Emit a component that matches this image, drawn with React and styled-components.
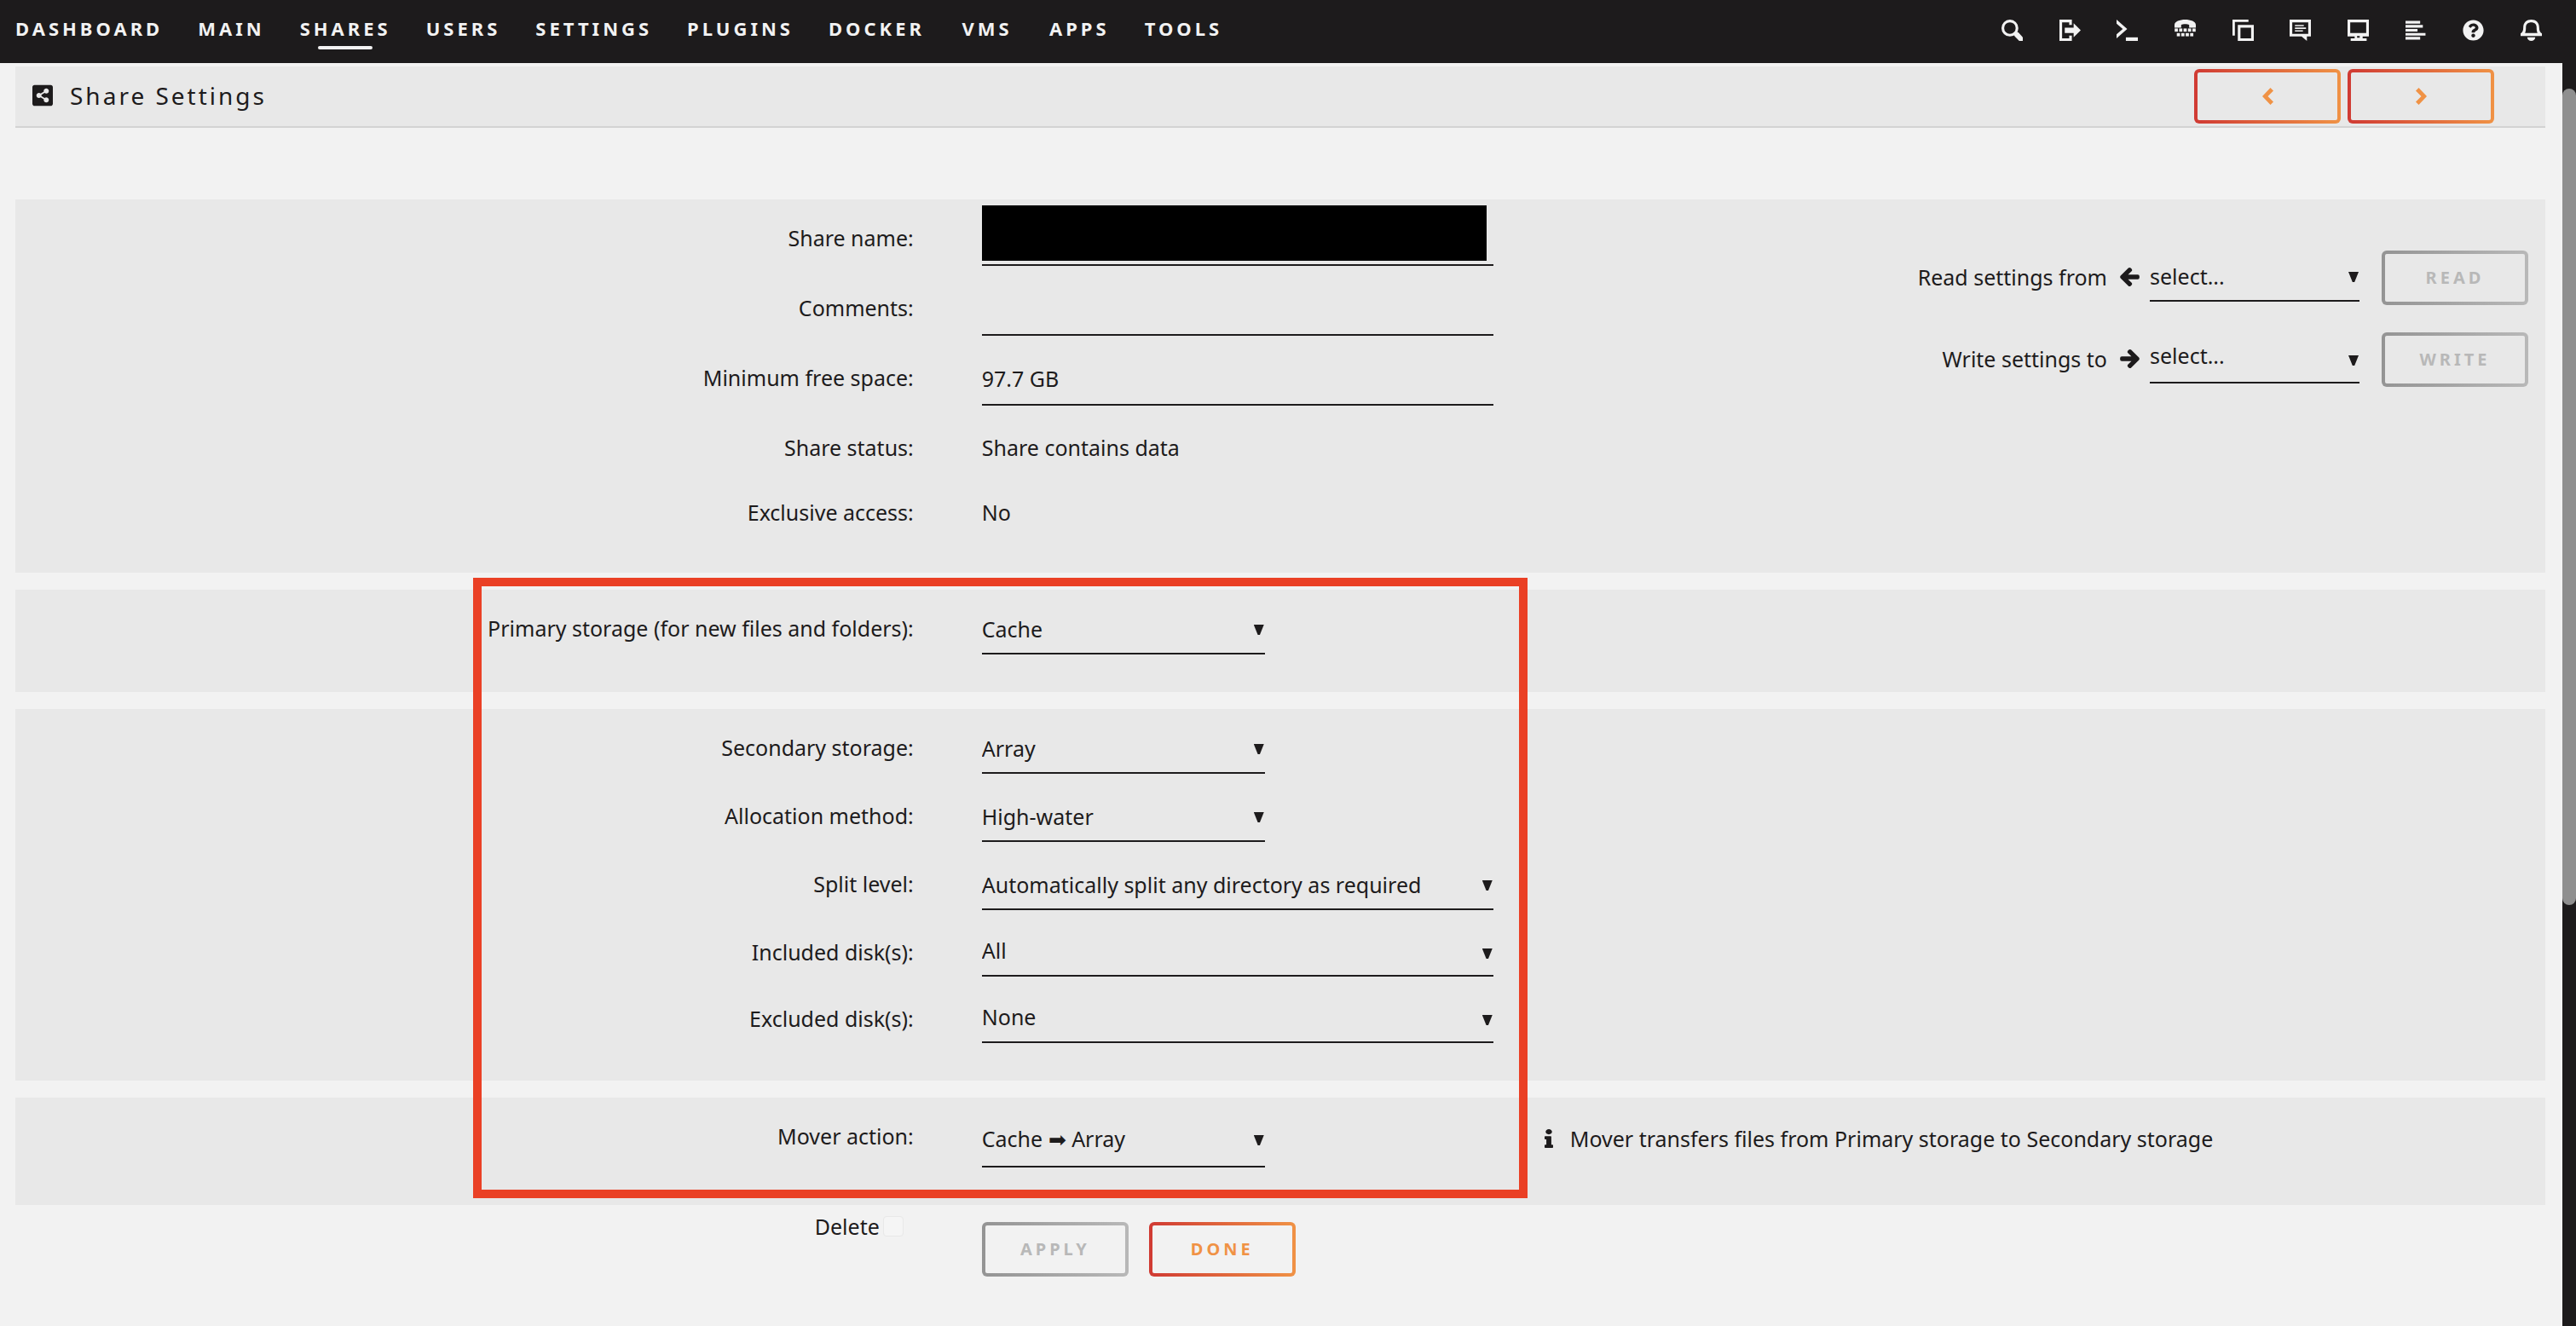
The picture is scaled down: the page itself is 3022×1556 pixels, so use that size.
import React from 'react'
import styled, { createGlobalStyle } from 'styled-components'
import {
  FaArrowLeft,
  FaArrowRight,
  FaInfo,
  FaQuestionCircle,
  FaShareAltSquare
} from 'react-icons/fa'

const ink = '#1d1b1c'
const paper = '#f2f2f2'
const panel = '#e8e8e8'
// left edge of the value column
const valueColumn = '38.2%'

const GlobalStyle = createGlobalStyle`
  * {
    box-sizing: border-box;
  }
  body {
    margin: 0;
    background: ${paper};
    color: ${ink};
    font-family: 'Noto Sans', sans-serif;
    font-size: 25px;
    line-height: 36px;
  }
  input, select, button {
    font: inherit;
    color: inherit;
  }
`

const Page = styled.div`
  display: flex;
  flex-direction: column;
  min-height: 100vh;
`

const Header = styled.header`
  display: flex;
  justify-content: space-between;
  height: 74px;
  padding: 0 40px 0 18px;
  background: ${ink};
`

const Nav = styled.nav`
  display: flex;
  gap: 41px;
`

const NavLink = styled.a`
  display: flex;
  flex-direction: column;
  align-items: center;
  padding-top: 15px;
  color: ${paper};
  font-size: 22px;
  font-weight: 700;
  letter-spacing: 4px;
  text-decoration: none;

  &::after {
    content: '';
    width: 64px;
    height: 4px;
    margin-top: 3px;
    border-radius: 2px;
    background: ${props => (props.$active ? paper : 'transparent')};
  }
`

const Tools = styled.div`
  display: flex;
  justify-content: space-between;
  width: 634px;
  padding-top: 23px;
`

const ToolButton = styled.button`
  display: flex;
  width: 25px;
  height: 25px;
  padding: 0;
  border: 0;
  background: none;
  color: ${paper};

  svg {
    width: 25px;
    height: 25px;
  }
`

const Body = styled.div`
  display: grid;
  grid-template-columns: 1fr 16px;
  flex: 1;
`

const Main = styled.main`
  padding: 4px 20px 0 18px;
`

const ScrollTrack = styled.div`
  padding-top: 30px;
  background: ${ink};
`

const ScrollThumb = styled.div`
  height: 66%;
  border-radius: 8px;
  background: #8f8f8f;
`

const TitleBar = styled.div`
  display: flex;
  align-items: center;
  justify-content: space-between;
  height: 72px;
  margin-bottom: 84px;
  padding: 0 60px 0 20px;
  border-bottom: 2px solid #d3d3d3;
  background: ${panel};
`

const Title = styled.h1`
  display: flex;
  align-items: center;
  gap: 20px;
  margin: 0;
  padding-bottom: 2px;
  font-size: 28px;
  font-weight: 400;
  letter-spacing: 3px;

  svg {
    width: 24px;
    height: 28px;
  }
`

const ButtonGroup = styled.div`
  display: flex;
  gap: ${props => props.$gap}px;
`

const Button = styled.button`
  display: flex;
  align-items: center;
  justify-content: center;
  width: 172px;
  height: 64px;
  padding: 0;
  border: 4px solid transparent;
  border-radius: 6px;
  background:
    linear-gradient(${props => props.$on || panel}, ${props => props.$on || panel}) padding-box,
    linear-gradient(90deg, #d03a33, #f09245) border-box;
  color: #f09245;
  font-size: 20px;
  font-weight: 700;
  letter-spacing: 4px;

  &:disabled {
    background:
      linear-gradient(${props => props.$on || panel}, ${props => props.$on || panel}) padding-box,
      linear-gradient(90deg, #949494, #b8b8b8) border-box;
    color: #b8b8b8;
  }

  svg {
    width: 13px;
    height: 20px;
  }
`

const Sections = styled.div`
  display: flex;
  flex-direction: column;
  gap: 20px;
`

const StorageSections = styled(Sections)`
  position: relative;
`

// red frame drawn over the storage settings
const Highlight = styled.div`
  position: absolute;
  top: -14px;
  bottom: 8px;
  left: calc(${valueColumn} - 597px);
  width: 1237px;
  border: 10px solid #ea4025;
  pointer-events: none;
`

const Panel = styled.section`
  display: grid;
  background: ${panel};
`

const Rows = styled.div`
  grid-area: 1 / 1;
  display: flex;
  flex-direction: column;
  gap: 31px;
  padding: 27px 0 44px;
`

const Row = styled.div`
  display: grid;
  grid-template-columns: ${valueColumn} 1fr;
  align-items: end;
`

const Label = styled.label`
  padding-right: 80px;
  padding-bottom: ${props => props.$drop}px;
  text-align: right;
`

const StaticRow = styled(Row)`
  padding-bottom: 9px;
`

const StaticLabel = styled.span`
  padding-right: 80px;
  text-align: right;
`

const InputBox = styled.div`
  position: relative;
  display: flex;
  width: 600px;
`

const Input = styled.input`
  width: 100%;
  height: 50px;
  padding: 0 0 12px;
  border: 0;
  border-bottom: 2px solid ${ink};
  border-radius: 0;
  background: none;
  line-height: 36px;
  outline: none;
`

const Redacted = styled.div`
  position: absolute;
  right: 8px;
  bottom: 6px;
  left: 0;
  height: 65px;
  background: #000;
`

const SelectBox = styled.div`
  display: grid;
  width: ${props => props.$width}px;
`

const StyledSelect = styled.select`
  grid-area: 1 / 1;
  appearance: none;
  width: 100%;
  padding: 0 24px ${props => props.$pad}px 0;
  border: 0;
  border-bottom: 2px solid ${ink};
  border-radius: 0;
  background: none;
  line-height: ${props => props.$line}px;
  outline: none;
`

const Caret = styled.span`
  grid-area: 1 / 1;
  align-self: end;
  justify-self: end;
  width: 12px;
  height: 12px;
  margin-right: 1px;
  margin-bottom: ${props => props.$lift}px;
  background: ${ink};
  clip-path: polygon(0 0, 100% 0, 60% 100%, 40% 100%);
  pointer-events: none;
`

const Transfer = styled.div`
  grid-area: 1 / 1;
  align-self: start;
  justify-self: end;
  display: flex;
  flex-direction: column;
  align-items: flex-end;
  gap: 32px;
  padding: 60px 20px 0 0;
`

const TransferRow = styled.div`
  display: flex;
  align-items: flex-end;
  height: 64px;

  ${SelectBox} {
    margin: 0 26px 4px 12px;
  }
`

const TransferLabel = styled.label`
  display: flex;
  align-items: center;
  gap: 15px;
  padding-bottom: 15px;

  svg {
    width: 23px;
    height: 24px;
    stroke-width: 36px;
    stroke-linejoin: round;
  }
`

const MoverCell = styled.div`
  display: flex;
  align-items: flex-end;
`

const MoverNote = styled.div`
  display: flex;
  align-items: center;
  gap: 20px;
  margin-left: 328px;
  padding-bottom: 16px;

  svg {
    width: 10px;
    height: 22px;
  }
`

const Actions = styled(Row)`
  align-items: start;
  padding-top: 7px;
`

const DeleteCell = styled.label`
  display: flex;
  align-items: center;
  justify-content: flex-end;
  gap: 4px;
  padding-right: 92px;
`

const Checkbox = styled.input`
  appearance: none;
  width: 24px;
  height: 24px;
  margin: 0;
  border: 1px solid #e8e8e8;
  border-radius: 4px;
  background: #f5f5f5;
`

const ActionButtons = styled(ButtonGroup)`
  padding-top: 13px;
`

const Icon = ({ children }) => (
  <svg viewBox="0 0 24 24" fill="currentColor" aria-hidden="true">
    {children}
  </svg>
)

const SearchIcon = () => (
  <Icon>
    <circle cx="9.5" cy="9.5" r="8" fill="none" stroke="currentColor" strokeWidth="3" />
    <path d="M14 17l3-3 2 .5 5 5.5v4h-4l-5-5z" />
  </Icon>
)

const LogoutIcon = () => (
  <Icon>
    <path d="M0 0h14v6h-3V3H3v18h8v-3h3v6H0z" />
    <path d="M6 9h10V4l8 8-8 8v-5H6z" />
  </Icon>
)

const TerminalIcon = () => (
  <Icon>
    <path d="M0 0l12 10.500L0 21v-4.500l7-6-7-6z" />
    <path d="M10.500 20H24v4H10.500z" />
  </Icon>
)

const PhoneIcon = () => (
  <Icon>
    <path d="M0 9V6c0-4 6-6 12-6s12 2 12 6v3h-7.500V6c-2-1.200-7-1.200-9 0v3z" />
    {[0, 5, 10, 15, 20].map(x => (
      <rect key={x} x={x + 0.2} y="10" width="3.600" height="3.600" />
    ))}
    {[2.6, 7.6, 12.6, 17.6].map(x => (
      <rect key={x} x={x} y="15.200" width="3.600" height="3.600" />
    ))}
  </Icon>
)

const CopyIcon = () => (
  <Icon>
    <path d="M0 0h18v2.700H2.700V18H0z" />
    <path d="M6 6h18v18H6zM9 9v12h12V9z" fillRule="evenodd" />
  </Icon>
)

const FeedbackIcon = () => (
  <Icon>
    <path d="M0 0h24v19h-4.500v5l-6-5H0zM3 3v13h18V3z" fillRule="evenodd" />
    <path d="M6 6h10v1.500H6zM6 8.900h12.500v1.600H6zM6 12h9v1.500H6z" />
  </Icon>
)

const MonitorIcon = () => (
  <Icon>
    <path d="M0 0h24v19h-7v2h4.500v3h-18v-3H8v-2H0zM3 3v12h18V3zM10.700 18.500v2h3v-2z" fillRule="evenodd" />
  </Icon>
)

const LogIcon = () => (
  <Icon>
    <path d="M0 1.500h16.500v3H0zM0 6h19.500v3H0zM0 10.500h13.500v3H0zM0 15h22.500v3H0zM0 19.500h16.500v3H0z" />
  </Icon>
)

const BellIcon = () => (
  <Icon>
    <path
      d="M0 18.500v-3c2-1 3-3 3-6.500C3 3 7 0 12 0s9 3 9 9c0 3.500 1 5.500 3 6.500v3zM5 15h14c-1-2-1-4-1-6.500C18 5 15.500 3 12 3S6 5 6 8.500C6 11 6 13 5 15z"
      fillRule="evenodd"
    />
    <path d="M7.500 20h9c0 2.500-2 4-4.500 4s-4.500-1.500-4.500-4z" />
  </Icon>
)

const PreviousIcon = () => (
  <svg viewBox="0 0 13 20" fill="currentColor" aria-hidden="true">
    <path d="M9.500 0L13 3.500 6.500 10l6.500 6.500L9.500 20 0 10z" />
  </svg>
)

const NextIcon = () => (
  <svg viewBox="0 0 13 20" fill="currentColor" aria-hidden="true">
    <path d="M3.500 0L0 3.500 6.500 10 0 16.500 3.500 20 13 10z" />
  </svg>
)

const links = ['DASHBOARD', 'MAIN', 'SHARES', 'USERS', 'SETTINGS', 'PLUGINS', 'DOCKER', 'VMS', 'APPS', 'TOOLS']

const tools = [
  ['Search', SearchIcon],
  ['Logout', LogoutIcon],
  ['Terminal', TerminalIcon],
  ['Contact', PhoneIcon],
  ['Copy', CopyIcon],
  ['Feedback', FeedbackIcon],
  ['System info', MonitorIcon],
  ['Log', LogIcon],
  ['Help', FaQuestionCircle],
  ['Notifications', BellIcon]
]

const Select = ({ id, value, width = 332, pad = 10, line = 36, lift = 23 }) => (
  <SelectBox $width={width}>
    <StyledSelect id={id} $pad={pad} $line={line} defaultValue={value}>
      <option>{value}</option>
    </StyledSelect>
    <Caret $lift={lift} />
  </SelectBox>
)

const SelectRow = ({ id, label, drop = 13, ...props }) => (
  <Row>
    <Label htmlFor={id} $drop={drop}>{label}</Label>
    <Select id={id} {...props} />
  </Row>
)

// the disk pickers sit a little tighter than the plain drop-downs
const DiskRow = props => <SelectRow width={600} drop={11} pad={13} line={32} lift={21} {...props} />

const App = () => (
  <Page>
    <GlobalStyle />
    <Header>
      <Nav>
        {links.map(name => (
          <NavLink key={name} href="#" $active={name === 'SHARES'}>{name}</NavLink>
        ))}
      </Nav>
      <Tools>
        {tools.map(([name, Glyph]) => (
          <ToolButton key={name} type="button" aria-label={name}>
            <Glyph />
          </ToolButton>
        ))}
      </Tools>
    </Header>
    <Body>
      <Main>
        <TitleBar>
          <Title>
            <FaShareAltSquare preserveAspectRatio="none" />
            Share Settings
          </Title>
          <ButtonGroup $gap={8}>
            <Button type="button" aria-label="Previous share"><PreviousIcon /></Button>
            <Button type="button" aria-label="Next share"><NextIcon /></Button>
          </ButtonGroup>
        </TitleBar>

        <Sections>
          <Panel>
            <Rows>
              <Row>
                <Label htmlFor="name" $drop={15}>Share name:</Label>
                <InputBox>
                  <Input id="name" />
                  <Redacted />
                </InputBox>
              </Row>
              <Row>
                <Label htmlFor="comments" $drop={15}>Comments:</Label>
                <InputBox>
                  <Input id="comments" />
                </InputBox>
              </Row>
              <Row>
                <Label htmlFor="floor" $drop={15}>Minimum free space:</Label>
                <InputBox>
                  <Input id="floor" defaultValue="97.7 GB" />
                </InputBox>
              </Row>
              <StaticRow>
                <StaticLabel>Share status:</StaticLabel>
                <span>Share contains data</span>
              </StaticRow>
              <StaticRow>
                <StaticLabel>Exclusive access:</StaticLabel>
                <span>No</span>
              </StaticRow>
            </Rows>
            <Transfer>
              <TransferRow>
                <TransferLabel htmlFor="read">Read settings from <FaArrowLeft stroke="currentColor" overflow="visible" /></TransferLabel>
                <Select id="read" value="select..." width={246} />
                <Button type="button" disabled>READ</Button>
              </TransferRow>
              <TransferRow>
                <TransferLabel htmlFor="write">Write settings to <FaArrowRight stroke="currentColor" overflow="visible" /></TransferLabel>
                <Select id="write" value="select..." width={246} pad={13} lift={21} />
                <Button type="button" disabled>WRITE</Button>
              </TransferRow>
            </Transfer>
          </Panel>

          <StorageSections>
            <Panel>
              <Rows>
                <SelectRow id="primary" label="Primary storage (for new files and folders):" value="Cache" />
              </Rows>
            </Panel>
            <Panel>
              <Rows>
                <SelectRow id="secondary" label="Secondary storage:" value="Array" />
                <SelectRow id="allocator" label="Allocation method:" value="High-water" />
                <SelectRow id="split" label="Split level:" value="Automatically split any directory as required" width={600} />
                <DiskRow id="include" label="Included disk(s):" value="All" />
                <DiskRow id="exclude" label="Excluded disk(s):" value="None" />
              </Rows>
            </Panel>
            <Panel>
              <Rows>
                <Row>
                  <Label htmlFor="mover" $drop={19}>Mover action:</Label>
                  <MoverCell>
                    <Select id="mover" value={'Cache \u27A1\uFE0E Array'} pad={14} lift={26} />
                    <MoverNote>
                      <FaInfo preserveAspectRatio="none" />
                      Mover transfers files from Primary storage to Secondary storage
                    </MoverNote>
                  </MoverCell>
                </Row>
              </Rows>
            </Panel>
            <Highlight />
          </StorageSections>
        </Sections>

        <Actions>
          <DeleteCell>
            Delete
            <Checkbox type="checkbox" />
          </DeleteCell>
          <ActionButtons $gap={24}>
            <Button type="button" $on={paper} disabled>APPLY</Button>
            <Button type="button" $on={paper}>DONE</Button>
          </ActionButtons>
        </Actions>
      </Main>
      <ScrollTrack aria-hidden="true">
        <ScrollThumb />
      </ScrollTrack>
    </Body>
  </Page>
)

export default App
